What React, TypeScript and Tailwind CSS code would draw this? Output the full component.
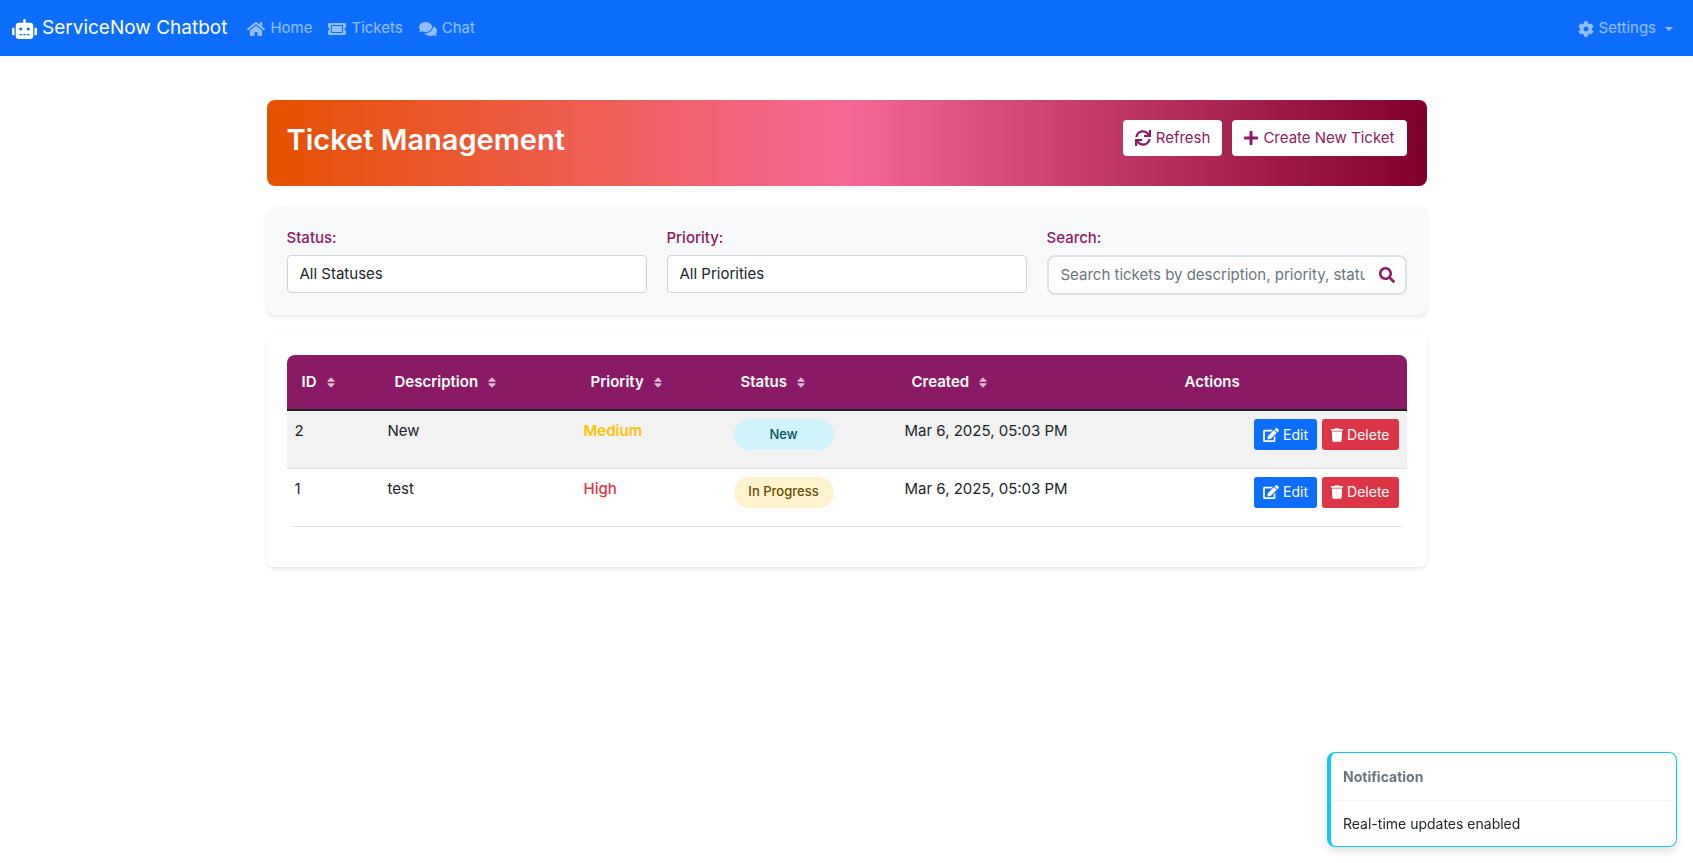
import { useState } from "react";
import type { ReactNode } from "react";
import {
  FaComments,
  FaCog,
  FaEdit,
  FaHome,
  FaPlus,
  FaRobot,
  FaSearch,
  FaSort,
  FaSync,
  FaTicketAlt,
  FaTrash,
} from "react-icons/fa";

type Ticket = {
  id: number;
  description: string;
  priority: "Medium" | "High";
  status: "New" | "In Progress";
  created: string;
};

const tickets: Ticket[] = [
  { id: 2, description: "New", priority: "Medium", status: "New", created: "Mar 6, 2025, 05:03 PM" },
  { id: 1, description: "test", priority: "High", status: "In Progress", created: "Mar 6, 2025, 05:03 PM" },
];

const priorityStyles = {
  Medium: "font-semibold text-[#ffc107]",
  High: "font-medium text-[#dc3545]",
};

const statusStyles = {
  New: "bg-[#cff4fc] text-[#055160]",
  "In Progress": "bg-[#fff3cd] text-[#664d03]",
};

const columns = ["ID", "Description", "Priority", "Status", "Created"];

function NavLink({ icon, children }: { icon: ReactNode; children: ReactNode }) {
  return (
    <a href="#" className="flex items-center gap-[5px] px-2 py-2 text-white/55">
      {icon}
      {children}
    </a>
  );
}

function Navbar() {
  return (
    <nav className="flex h-14 items-center bg-[#0d6efd] px-3 pt-px">
      <a href="#" className="mr-3 flex items-center gap-[5px] text-[19px] text-white">
        <FaRobot className="h-5 w-[25px]" />
        ServiceNow Chatbot
      </a>
      <div className="flex flex-1 items-center">
        <NavLink icon={<FaHome className="h-4 w-[18px]" />}>Home</NavLink>
        <NavLink icon={<FaTicketAlt className="h-4 w-[18px]" />}>Tickets</NavLink>
        <NavLink icon={<FaComments className="h-4 w-[18px]" />}>Chat</NavLink>
      </div>
      <button type="button" className="flex items-center gap-[5px] px-2 py-2 text-white/55">
        <FaCog className="size-4" />
        Settings
        <span className="ml-1 border-x-4 border-t-4 border-x-transparent border-t-current" />
      </button>
    </nav>
  );
}

function PageHeader() {
  const button = "flex h-9 items-center gap-[5px] rounded bg-white px-3 text-[#8b1a66]";
  return (
    <header className="flex items-start justify-between rounded-lg bg-linear-to-r/srgb from-[#e65100] via-[#f46896] to-[#80002d] p-5">
      <h1 className="mb-1.5 text-[29px] leading-10 font-semibold text-white">Ticket Management</h1>
      <div className="flex gap-2.5">
        <button type="button" className={button}>
          <FaSync className="size-4" />
          Refresh
        </button>
        <button type="button" className={button}>
          <FaPlus className="h-4 w-[14px]" />
          Create New Ticket
        </button>
      </div>
    </header>
  );
}

function Filters() {
  const [query, setQuery] = useState("");
  const label = "mb-[5px] block leading-6 font-medium text-[#8b1a66]";
  const select =
    "block h-[38px] w-full appearance-none rounded border border-[#ced4da] bg-white px-3 text-[#212529]";
  return (
    <section className="grid grid-cols-3 gap-5 rounded-lg bg-[#f8f9fa] p-5 shadow-[0_2px_4px_rgba(0,0,0,0.1)]">
      <div>
        <label htmlFor="status" className={label}>Status:</label>
        <select id="status" className={select}>
          <option>All Statuses</option>
          <option>New</option>
          <option>In Progress</option>
        </select>
      </div>
      <div>
        <label htmlFor="priority" className={label}>Priority:</label>
        <select id="priority" className={select}>
          <option>All Priorities</option>
          <option>High</option>
          <option>Medium</option>
        </select>
      </div>
      <div>
        <label htmlFor="search" className={label}>Search:</label>
        <div className="flex h-10 overflow-hidden rounded-lg border-2 border-[#dee2e6] bg-white">
          <input
            id="search"
            type="text"
            value={query}
            onChange={(e) => setQuery(e.target.value)}
            placeholder="Search tickets by description, priority, status..."
            className="ml-3 min-w-0 flex-1 outline-none placeholder:text-[#6c757d]"
          />
          <button type="button" aria-label="Search" className="flex w-10 items-center justify-center pl-1 text-[#8b1a66]">
            <FaSearch className="size-4" />
          </button>
        </div>
      </div>
    </section>
  );
}

function TicketTable() {
  const action = "inline-flex h-[31px] items-center gap-1 rounded-[3px] px-[9px] text-sm text-white";
  return (
    <section className="rounded-lg bg-white p-5 shadow-[0_2px_4px_rgba(0,0,0,0.1)]">
      <div className="mb-5 overflow-hidden rounded-lg">
        <table className="w-full table-fixed border-collapse text-[#212529]">
          <colgroup>
            <col className="w-[93px]" />
            <col className="w-[196px]" />
            <col className="w-[150px]" />
            <col className="w-[171px]" />
            <col className="w-[273px]" />
            <col className="w-[237px]" />
          </colgroup>
          <thead>
            <tr className="h-[55px] border-b-2 border-[#212529] bg-[#8b1a66] text-left text-white">
              {columns.map((name) => (
                <th key={name} className="px-[15px] font-semibold">
                  <span className="flex items-center gap-2.5">
                    {name}
                    <FaSort className="h-[13px] w-2 opacity-70" />
                  </span>
                </th>
              ))}
              <th className="px-[15px] font-semibold">Actions</th>
            </tr>
          </thead>
          <tbody>
            {tickets.map((t) => (
              <tr key={t.id} className="h-[58px] border-b border-[#dee2e6] align-top odd:bg-[#f2f2f2]">
                <td className="p-2 leading-6">{t.id}</td>
                <td className="p-2 leading-6">{t.description}</td>
                <td className={`p-2 leading-6 ${priorityStyles[t.priority]}`}>{t.priority}</td>
                <td className="p-2">
                  <span
                    className={`flex h-[31px] w-[100px] items-center justify-center rounded-full text-[13px] font-medium ${statusStyles[t.status]}`}
                  >
                    {t.status}
                  </span>
                </td>
                <td className="p-2 leading-6">{t.created}</td>
                <td className="p-2">
                  <div className="flex justify-end gap-[5px]">
                    <button type="button" className={`${action} bg-[#0d6efd]`}>
                      <FaEdit className="h-[14px] w-4" />
                      Edit
                    </button>
                    <button type="button" className={`${action} bg-[#dc3545]`}>
                      <FaTrash className="h-[14px] w-3" />
                      Delete
                    </button>
                  </div>
                </td>
              </tr>
            ))}
          </tbody>
        </table>
      </div>
    </section>
  );
}

function Toast() {
  return (
    <div
      role="status"
      className="fixed right-4 bottom-4 w-[350px] rounded-lg border border-l-4 border-[#0dcaf0] bg-white text-sm leading-[21px] shadow-[0_4px_8px_rgba(0,0,0,0.12)]"
    >
      <div className="border-b border-black/5 px-3 py-[13px] font-bold text-[#6c757d]">Notification</div>
      <div className="px-3 py-3 text-[#212529]">Real-time updates enabled</div>
    </div>
  );
}

export default function App() {
  return (
    <div className="min-h-screen bg-white font-[Inter,sans-serif] text-[15px]">
      <Navbar />
      <main className="mx-auto mt-6 flex max-w-[1200px] flex-col gap-5 p-5">
        <PageHeader />
        <Filters />
        <TicketTable />
      </main>
      <Toast />
    </div>
  );
}
